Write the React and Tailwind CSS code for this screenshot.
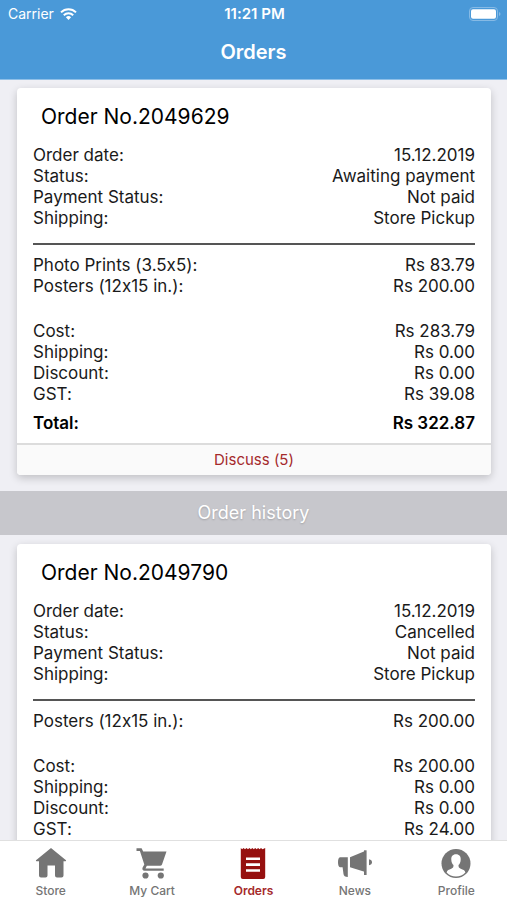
import React from "react";

const orders = [
  {
    id: "2049629",
    info: [
      ["Order date:", "15.12.2019"],
      ["Status:", "Awaiting payment"],
      ["Payment Status:", "Not paid"],
      ["Shipping:", "Store Pickup"],
    ],
    items: [
      ["Photo Prints (3.5x5):", "Rs 83.79"],
      ["Posters (12x15 in.):", "Rs 200.00"],
    ],
    costs: [
      ["Cost:", "Rs 283.79"],
      ["Shipping:", "Rs 0.00"],
      ["Discount:", "Rs 0.00"],
      ["GST:", "Rs 39.08"],
    ],
    total: "Rs 322.87",
    messages: 5,
  },
  {
    id: "2049790",
    info: [
      ["Order date:", "15.12.2019"],
      ["Status:", "Cancelled"],
      ["Payment Status:", "Not paid"],
      ["Shipping:", "Store Pickup"],
    ],
    items: [["Posters (12x15 in.):", "Rs 200.00"]],
    costs: [
      ["Cost:", "Rs 200.00"],
      ["Shipping:", "Rs 0.00"],
      ["Discount:", "Rs 0.00"],
      ["GST:", "Rs 24.00"],
    ],
  },
];

const WifiIcon = () => (
  <svg className="h-3 w-[17px]" viewBox="0 0 17 12" fill="none" stroke="currentColor" strokeWidth="2" aria-hidden="true">
    <path d="M1 4.4a10.6 10.6 0 0 1 15 0" />
    <path d="M3.8 7.2a6.7 6.7 0 0 1 9.4 0" />
    <path d="M8.5 12 5.9 9.3a3.7 3.7 0 0 1 5.2 0Z" fill="currentColor" stroke="none" />
  </svg>
);

const BatteryIcon = () => (
  <svg className="h-[14px] w-8" viewBox="0 0 32 14" aria-hidden="true">
    <rect x="0.5" y="0.5" width="28" height="13" rx="3.5" fill="none" stroke="#86bae5" />
    <rect x="2" y="2.3" width="25" height="9.4" rx="2" fill="#fff" />
    <path d="M30 5v4q1.5-.5 1.5-2T30 5Z" fill="#86bae5" />
  </svg>
);

const StoreIcon = () => (
  <svg className="size-8" viewBox="0 0 32 32" fill="currentColor" aria-hidden="true">
    <path d="M16 1 31 13.2q.4 1-.6 1H28.500V28.500q0 2-2 2H22q-2 0-2-2V18.500h-7.500V28.500q0 2-2 2H6q-2 0-2-2V14.200H1.600q-1 0-.6-1Z" />
  </svg>
);

const CartIcon = () => (
  <svg className="size-8" viewBox="0 0 32 32" fill="currentColor" aria-hidden="true">
    <path d="M.5 1.200H5.600L7.200 4.600H30.500L26 17.500q-.5 1.300-2 1.300H10.800l-1.300 2.600h18.200v2.400H8.500q-2.700-.4-2-3L8.300 17.400 3.900 4H.5Z" />
    <circle cx="9.5" cy="28.5" r="3.1" />
    <circle cx="24.8" cy="28.5" r="3.1" />
  </svg>
);

const OrdersIcon = () => (
  <svg className="size-8" viewBox="0 0 32 32" aria-hidden="true">
    <path
      d="M3.800 1l1.300 1.300L6.600 1 8 2.300 9.500 1 11 2.300 12.400 1l1.500 1.300L15.300 1l1.500 1.300L18.200 1l1.500 1.300L21.100 1l1.500 1.300L24 1l1.500 1.300L28.200 1V30q0 2-2 2H5.800q-2 0-2-2Z"
      fill="#96100f"
    />
    <path d="M9 11.800H23M9 17.600H23M9 23.500H23" stroke="#fff" strokeWidth="2.6" />
  </svg>
);

const NewsIcon = () => (
  <svg className="h-8 w-9" viewBox="0 0 36 32" fill="currentColor" aria-hidden="true">
    <path d="M3 10.200H10.800V30q-4 0-4.300-3L5.600 20.200H3Q1 19.800 1 15.200T3 10.200Z" />
    <path d="M13 10.200 27.500 4.300V24.800L13 20.200Z" />
    <path d="M27 3.300h2.600V28H27Z" />
    <path d="M32 12.300q3 .6 3 3t-3 3Z" />
  </svg>
);

const ProfileIcon = () => (
  <svg className="size-8" viewBox="0 0 32 32" aria-hidden="true">
    <circle cx="16" cy="16.5" r="14.5" fill="currentColor" />
    <path
      d="M16 7.200c3.300 0 5 2.300 4.700 5.500-.2 2.900-1 4.300-2.200 5.400 0 2.400.5 3 2.200 3.600 2.400.9 4.200 1.400 4.700 3.700-2.300 2.600-5.700 4.100-9.400 4.100s-7.100-1.500-9.400-4.100c.5-2.300 2.300-2.800 4.700-3.700 1.700-.6 2.200-1.200 2.200-3.600-1.200-1.100-2-2.500-2.200-5.400-.3-3.200 1.400-5.500 4.700-5.500Z"
      fill="#fff"
    />
  </svg>
);

const tabs = [
  { name: "Store", Icon: StoreIcon },
  { name: "My Cart", Icon: CartIcon },
  { name: "Orders", Icon: OrdersIcon, active: true },
  { name: "News", Icon: NewsIcon },
  { name: "Profile", Icon: ProfileIcon },
];

const Rows = ({ rows }) => (
  <dl>
    {rows.map(([label, value]) => (
      <div key={label} className="flex justify-between">
        <dt>{label}</dt>
        <dd>{value}</dd>
      </div>
    ))}
  </dl>
);

const OrderCard = ({ order }) => (
  <article className="ml-[17px] mr-4 rounded bg-white shadow-[0_3px_8px_rgba(0,0,0,0.2)]">
    <div className="px-4 pt-[14px] pb-[9px] text-[17px] leading-[21px] text-[#1a1a1a]">
      <h2 className="mb-[13px] px-2 text-[21px] leading-[30px] text-black">Order No.{order.id}</h2>
      <Rows rows={order.info} />
      <hr className="mt-[14px] mb-[10px] border-t-2 border-[#555]" />
      <Rows rows={order.items} />
      <div className="mt-6">
        <Rows rows={order.costs} />
      </div>
      {order.total && (
        <div className="mt-2 flex justify-between font-semibold text-black">
          <span>Total:</span>
          <span>{order.total}</span>
        </div>
      )}
    </div>
    {order.messages && (
      <button
        type="button"
        className="block w-full rounded-b border-t-2 border-[#dcdcdc] bg-[#fafafa] text-[15px] leading-[30px] text-[#a52a2c]"
      >
        Discuss ({order.messages})
      </button>
    )}
  </article>
);

const App = () => {
  return (
    <div className="flex h-screen flex-col overflow-hidden bg-[#efeff4] font-['Inter',sans-serif] [font-feature-settings:'calt'_0]">
      <header className="shrink-0 border-b border-[#8fc0e8] bg-[#4a99d8] text-white">
        <div className="grid h-7 grid-cols-3 items-center pr-1.5 pl-2 text-sm">
          <div className="flex items-center gap-1.5">
            <span>Carrier</span>
            <WifiIcon />
          </div>
          <span className="text-center text-[15px] font-semibold">11:21 PM</span>
          <div className="flex justify-end">
            <BatteryIcon />
          </div>
        </div>
        <h1 className="pt-[9px] pb-3 text-center text-xl leading-[30px] font-semibold">Orders</h1>
      </header>

      <main className="min-h-0 flex-1 overflow-hidden pt-2">
        <OrderCard order={orders[0]} />
        <h2 className="mt-4 mb-[9px] bg-[#c7c7cc] text-center text-lg leading-[44px] text-white [text-shadow:0_1px_2px_rgba(0,0,0,0.2)]">
          Order history
        </h2>
        <OrderCard order={orders[1]} />
      </main>

      <nav className="grid h-[60px] shrink-0 grid-cols-5 border-t border-[#e0e0e0] bg-white">
        {tabs.map(({ name, Icon, active }) => (
          <a
            key={name}
            href="#"
            aria-current={active ? "page" : undefined}
            className={
              active
                ? "flex flex-col items-center pt-[6px] text-xs font-semibold text-[#a52a2c]"
                : "flex flex-col items-center pt-[6px] text-xs font-medium text-[#757575]"
            }
          >
            <Icon />
            <span className="mt-1 leading-4">{name}</span>
          </a>
        ))}
      </nav>
    </div>
  );
};

export default App;
